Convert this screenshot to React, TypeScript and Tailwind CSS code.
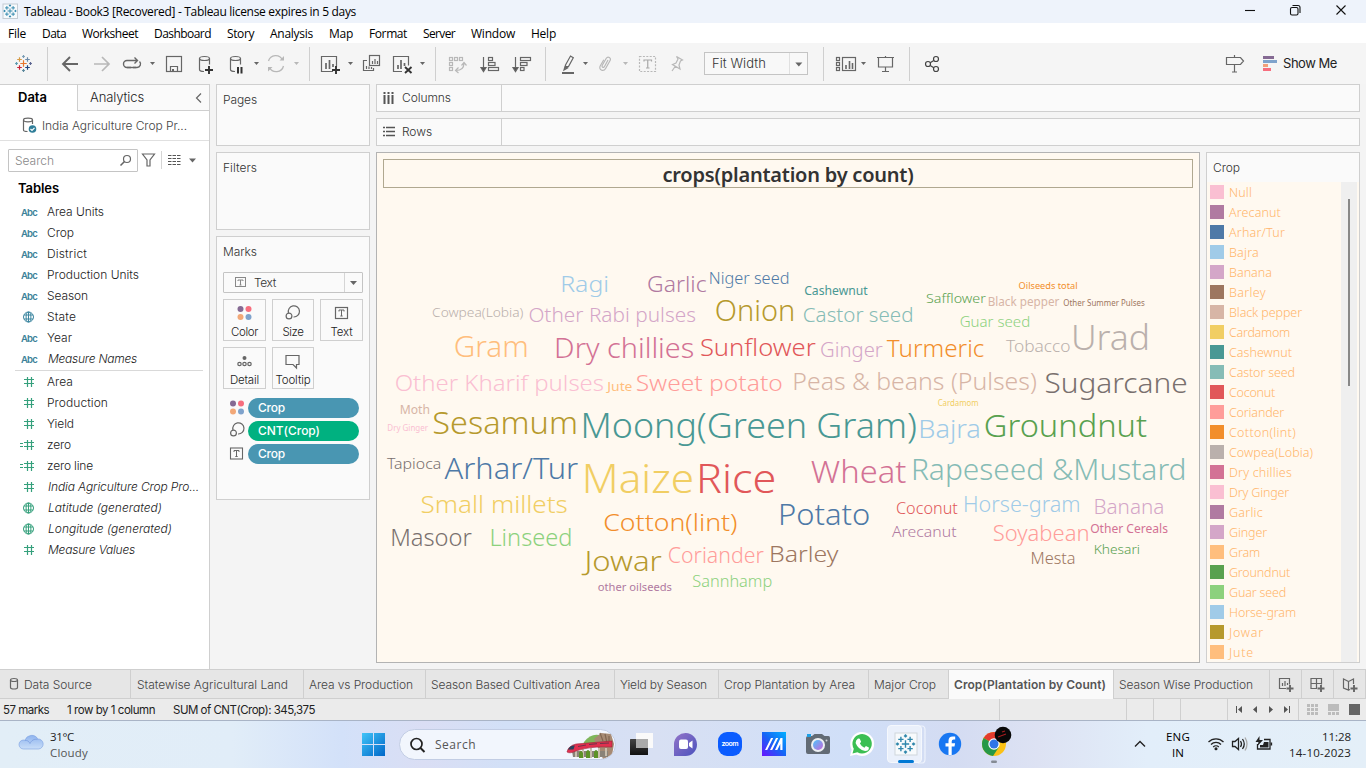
import { useLayoutEffect, useRef, useState } from "react";
import type { ReactNode } from "react";

/* One line of text whose tracking is set so that it fills a given width. */
function T({ w, className = "", children }: { w: number; className?: string; children: string }) {
  const ref = useRef<HTMLSpanElement>(null);
  const [ls, setLs] = useState(0);
  useLayoutEffect(() => {
    const el = ref.current;
    if (!el) return;
    const natural = el.getBoundingClientRect().width - ls * children.length;
    setLs((w - natural) / children.length);
  }, [w, children]);
  return (
    <span ref={ref} className={"inline-block shrink-0 whitespace-pre " + className} style={{ letterSpacing: ls }}>
      {children}
    </span>
  );
}

/* A drawing tile; its contents use window coordinates. */
function Tile({ x, y, w, h, children }: { x: number; y: number; w: number; h: number; children?: ReactNode }) {
  return (
    <svg className="block shrink-0" width={w} height={h} viewBox={`${x} ${y} ${w} ${h}`} fill="none" stroke="#666" strokeWidth={1.2}>
      {children}
    </svg>
  );
}

const Caret = ({ x, y = 63, c = "#666", s = 2.5 }: { x: number; y?: number; c?: string; s?: number }) => (
  <path d={`M${x - s} ${y - 1}h${2 * s}l${-s} ${s + 0.5}z`} fill={c} stroke="none" />
);

const Plus = ({ x, y, s = 4, c = "#333" }: { x: number; y: number; s?: number; c?: string }) => (
  <path d={`M${x - s} ${y}h${2 * s}M${x} ${y - s}v${2 * s}`} stroke={c} strokeWidth={1.9} />
);

function TableauMark({ x, y, k = 1, mono = false }: { x: number; y: number; k?: number; mono?: boolean }) {
  const marks: [number, number, number, string][] = [
    [0, 0, 3.2, "#e8762c"], [-4, -4, 2.3, "#d59a45"], [4, -4, 2.3, "#6c8ba9"], [-4, 4, 2.3, "#c72035"], [4, 4, 2.3, "#1f447e"],
    [0, -7, 1.4, "#7a9db5"], [0, 7, 1.4, "#59879b"], [-7, 0, 1.4, "#5b9aaf"], [7, 0, 1.4, "#5b6591"],
  ];
  return (
    <g transform={`translate(${x} ${y}) scale(${k})`} strokeWidth={1.2}>
      {marks.map(([a, b, s, c], i) => (
        <path key={i} d={`M${a - s} ${b}h${2 * s}M${a} ${b - s}v${2 * s}`} stroke={mono ? "#2e86ab" : c} />
      ))}
    </g>
  );
}

const Sep = ({ x, w = 1 }: { x: number; w?: number }) => (
  <Tile x={x} y={43} w={w} h={41}><path d={`M${x + 0.5} 47v34`} stroke="#cfcfcf" strokeWidth={1} /></Tile>
);

const MENU: [string, number, number][] = [
  ["File", 8, 18], ["Data", 42, 24], ["Worksheet", 82, 56], ["Dashboard", 154, 57], ["Story", 227, 27], ["Analysis", 270, 43],
  ["Map", 329, 24], ["Format", 369, 38], ["Server", 423, 32], ["Window", 471, 44], ["Help", 531, 25],
];

function TopBars() {
  return (
    <>
      <header className="flex h-[23px] items-center bg-[#eef3fb] text-[12px] text-black">
        <Tile x={0} y={0} w={24} h={23}>
          <rect x={3} y={4} width={14.5} height={14.5} fill="#f7fafc" stroke="#c4ccd4" strokeWidth={1} />
          <TableauMark x={10} y={11} k={0.78} mono />
        </Tile>
        <T w={332} className="pt-px">Tableau - Book3 [Recovered] - Tableau license expires in 5 days</T>
        <div className="ml-auto">
          <Tile x={1236} y={0} w={130} h={23}>
            <g stroke="#111" strokeWidth={1.1}>
              <path d="M1245 10.5h10" />
              <rect x={1290.5} y={7.5} width={7.5} height={7.5} rx={1.5} />
              <path d="M1292.5 5.5h5.5a2 2 0 0 1 2 2v5.5" />
              <path d="M1336.5 5.5l9 9m0-9l-9 9" />
            </g>
          </Tile>
        </div>
      </header>
      <nav className="flex h-5 items-center bg-white pl-2 text-[12px] leading-5 text-black">
        {MENU.map(([t, x, w], i) => (
          <div key={t} className="flex shrink-0 pt-px" style={{ width: (MENU[i + 1]?.[1] ?? x + w) - x }}><T w={w}>{t}</T></div>
        ))}
      </nav>
      <div className="flex h-[41px] items-center bg-[#f5f5f5]">
        <Tile x={0} y={43} w={47} h={41}><TableauMark x={23.5} y={63.5} /></Tile>
        <Sep x={47} w={13} />
        <Tile x={60} y={43} w={60} h={41}>
          <path d="M78 64H63m7-7l-7 7 7 7" strokeWidth={1.9} />
          <path d="M94 64h15m-7-7l7 7-7 7" strokeWidth={1.7} stroke="#b8b8b8" />
        </Tile>
        <Tile x={120} y={43} w={42} h={41}>
          <path d="M131 67.5h-4a3.5 3.5 0 0 1 0-7h10.500m-3-3l3 3-3 3M133 67.500h4a3.500 3.500 0 0 0 2.500-6" strokeWidth={1.4} />
          <path d="M127 67.500h9" strokeWidth={1.400} />
          <Caret x={152.500} />
        </Tile>
        <Tile x={162} y={43} w={28} h={41}>
          <rect x={166.500} y={56.500} width={15} height={15} />
          <path d="M170.500 71.500v-5h7v5" /><path d="M172 69h2v2h-2z" fill="#666" stroke="none" />
        </Tile>
        <Tile x={190} y={43} w={74} h={41}>
          {[0, 31].map((d) => (
            <g key={d} transform={`translate(${d} 0)`}>
              <ellipse cx={204.500} cy={58.500} rx={5} ry={2} /><path d="M199.500 58.500v11c0 1.200 1.800 2 4.500 2M209.500 58.500v6" />
            </g>
          ))}
          <Plus x={209} y={70} />
          <path d="M238 67v6.500m3.500-6.500v6.500" stroke="#333" strokeWidth={2} />
          <Caret x={256.500} />
        </Tile>
        <Tile x={264} y={43} w={45} h={41}>
          <g stroke="#b8b8b8" strokeWidth={1.300}>
            <path d="M268.500 61a7.500 7.500 0 0 1 14-1m1 6a7.500 7.500 0 0 1-14 1.500" />
            <path d="M279.500 60.500h4.500v-4.500zM272.500 67h-4.500v4.500z" fill="#b8b8b8" stroke="none" />
          </g>
          <Caret x={296.500} c="#b8b8b8" />
        </Tile>
        <Sep x={309} w={8} />
        <Tile x={317} y={43} w={42} h={41}>
          <path d="M333 71.500h-11.500v-15h15v10" />
          <path d="M326 63v6m3.500-9v9m3.500-5v3" strokeWidth={1.700} />
          <Plus x={336} y={70} />
          <Caret x={350.500} />
        </Tile>
        <Tile x={359} y={43} w={29} h={41}>
          <rect x={369.500} y={55.500} width={10} height={10} /><path d="M367 60.500h-3.500v10h10V68" />
          <path d="M372.500 61v3m2.500-5v5m2.500-3v3M366.500 66v3m2.500-2.500v2.500m2.500-2v2" />
        </Tile>
        <Tile x={388} y={43} w={47} h={41}>
          <path d="M402 71.500h-8.500v-15h15v9" /><path d="M398 65v4m3-9v9m3.500-6v3" strokeWidth={1.700} />
          <path d="M405 67l6.500 6m0-6l-6.500 6" stroke="#333" strokeWidth={1.900} />
          <Caret x={422.500} />
        </Tile>
        <Sep x={435} w={10} />
        <Tile x={445} y={43} w={28} h={41}>
          <g stroke="#b8b8b8">
            {[[449.500, 57.500], [454.500, 57.500], [459.500, 57.500], [449.500, 62.500], [449.500, 67.500]].map(([a, b]) => <rect key={`${a}${b}`} x={a} y={b} width={3} height={3} />)}
            <path d="M464 63c0 5-3 7.500-8 7.500m5.500-5l2.500-3 2.500 3M458.500 67.500l-3 3 3 2.500" />
          </g>
        </Tile>
        <Tile x={473} y={43} w={35} h={41}>
          <path d="M483.500 57v13" /><path d="M481 67.500h5l-2.500 4z" fill="#555" />
          <rect x={488.500} y={57.500} width={4} height={3} /><rect x={488.500} y={62.500} width={6.500} height={3} /><rect x={488.500} y={67.500} width={10} height={3} />
        </Tile>
        <Tile x={508} y={43} w={37} h={41}>
          <path d="M515.500 57v13" /><path d="M513 67.500h5l-2.500 4z" fill="#555" />
          <rect x={520.500} y={57.500} width={10} height={3} /><rect x={520.500} y={62.500} width={6.500} height={3} /><rect x={520.500} y={67.500} width={3.500} height={3} />
        </Tile>
        <Sep x={545} w={13} />
        <Tile x={558} y={43} w={36} h={41}>
          <path d="M565.500 65l5-9 2.800 1.800-4.800 8.700-2.800 1.500zM565 66.500l2.500 1.500-3.500 2zM568 66.500h-2.500" /><path d="M562 73h12" strokeWidth={2} />
          <Caret x={585.500} />
        </Tile>
        <Tile x={594} y={43} w={42} h={41}>
          <path d="M608 60l-3.500 6.500c-1 1.800-3.200.5-2.200-1.200l4-7c1.500-2.500 5.300-.5 3.800 2.200l-4.500 8c-2.200 3.800-7.500 1.200-5.300-2.700l3.500-6" stroke="#b8b8b8" />
          <Caret x={625.500} c="#b8b8b8" />
        </Tile>
        <Tile x={636} y={43} w={24} h={41}>
          <rect x={639.500} y={56.500} width={16} height={15} stroke="#b8b8b8" strokeDasharray="2 1.400" />
          <path d="M644 61.500v-1.500h7.500v1.500M647.750 60v8M646 68h3.500" stroke="#a8a8a8" />
        </Tile>
        <Tile x={660} y={43} w={44} h={41}>
          <path d="M676.500 56.500l6 3.500-2 1-1.500 4 1 4-7.500-4.500 3.500-1.500 2-4zM675.500 66l-3.500 5" stroke="#b8b8b8" />
        </Tile>
        <div className="flex h-[23px] w-[104px] items-center border border-[#c4c4c4] bg-[#f8f8f8] pl-[7px] font-[Inter] text-[13px] font-light text-[#333]">
          <T w={54}>Fit Width</T>
          <div className="ml-auto flex h-full border-l border-[#e0e0e0]"><Tile x={789} y={53} w={17} h={21}><Caret x={797.800} y={63.500} s={3.500} /></Tile></div>
        </div>
        <Tile x={808} y={43} w={62} h={41}>
          <path d="M823.500 47v34" stroke="#cfcfcf" strokeWidth={1} />
          {[57.500, 62.500, 67.500].map((b) => <rect key={b} x={836.500} y={b} width={3} height={3} />)}
          <rect x={842.500} y={57.500} width={13} height={13} /><path d="M846 65v4m3.500-8v8m3-6v6" strokeWidth={1.600} />
          <Caret x={863.500} />
        </Tile>
        <Tile x={870} y={43} w={39} h={41}>
          <path d="M877 57.500h17M878.500 57.500v9.500h14v-9.500M885.500 56v1.500M885.500 67v5M882 71.500h7" />
        </Tile>
        <Sep x={909} w={11} />
        <Tile x={920} y={43} w={22} h={41}>
          <g stroke="#444"><circle cx={928} cy={64} r={2.500} /><circle cx={936} cy={59} r={2.500} /><circle cx={936} cy={69} r={2.500} /><path d="M930.200 62.700l3.600-2.300m-3.600 5l3.600 2.300" /></g>
        </Tile>
        <div className="ml-auto flex items-center pr-[29px] font-[Inter] text-[13px] text-[#222]">
          <Tile x={1222} y={43} w={61} h={41}>
            <path d="M1226.500 57.500h14l3 3.500-3 3.500h-14zM1234.500 55v2.500m0 7v7.500m-2.500 0h5" />
            <g strokeWidth={3}><path d="M1263 57.500h11" stroke="#856a93" /><path d="M1263 61.500h14" stroke="#7fa3cc" /><path d="M1263 65.500h5" stroke="#f2a07a" /><path d="M1263 69.500h8" stroke="#f76e7e" /></g>
          </Tile>
          <T w={54}>Show Me</T>
        </div>
      </div>
    </>
  );
}

type Kind = "abc" | "geo" | "num" | "calc" | "geoNum";
const FIELDS: [string, Kind, number, boolean?][] = [
  ["Area Units", "abc", 57], ["Crop", "abc", 27], ["District", "abc", 40], ["Production Units", "abc", 92], ["Season", "abc", 41], ["State", "geo", 29], ["Year", "abc", 25], ["Measure Names", "abc", 90, true],
];
const MEASURES: [string, Kind, number, boolean?][] = [
  ["Area", "num", 26], ["Production", "num", 61], ["Yield", "num", 27], ["zero", "calc", 24], ["zero line", "calc", 46],
  ["India Agriculture Crop Pro...", "num", 152, true], ["Latitude (generated)", "geoNum", 115, true], ["Longitude (generated)", "geoNum", 125, true], ["Measure Values", "num", 88, true],
];

function FieldIcon({ kind }: { kind: Kind }) {
  if (kind === "abc") return <T w={16} className="font-[Inter] text-[9.500px] font-semibold text-[#3c8199]">Abc</T>;
  const c = kind === "geo" ? "#3c86a0" : "#35a07c";
  return (
    <svg className="-ml-0.5 block" width={18} height={14} fill="none" stroke={c} strokeWidth={1}>
      {kind === "geo" || kind === "geoNum" ? (
        <><circle cx={9.500} cy={7} r={5} /><ellipse cx={9.500} cy={7} rx={2.400} ry={5} /><path d="M5 5h9M5 9h9M9.500 2v10" /></>
      ) : (
        <path d="M8.500 2v10M12.500 2v10M5 4.500h10M5 8.500h10" strokeWidth={1.200} />
      )}
      {kind === "calc" && <path d="M1 5.500h3M1 8.500h3" />}
    </svg>
  );
}

const Row = ({ f: [name, kind, w, it] }: { f: [string, Kind, number, boolean?] }) => (
  <div className="flex h-[21px] items-center pl-[21px]">
    <div className="w-[26px] shrink-0 pt-px"><FieldIcon kind={kind} /></div>
    <T w={w} className={it ? "pl-px italic" : ""}>{name}</T>
  </div>
);

function DataPane() {
  return (
    <aside className="flex w-[210px] shrink-0 flex-col border-r border-[#cfcfcf] bg-white font-[Inter] text-[12px] font-light text-[#222]">
      <div className="flex h-[27px] shrink-0 border-t border-[#cfcfcf]">
        <div className="flex w-[77px] items-center pl-[18px] text-[13px] font-semibold text-black"><T w={29}>Data</T></div>
        <div className="flex flex-1 items-center border-b border-l border-[#cfcfcf] bg-[#fafafa] pl-3 text-[13px]">
          <T w={54}>Analytics</T>
          <div className="ml-auto"><Tile x={192} y={84} w={17} h={26}><path d="M201 92.500l-4.500 4.500 4.500 4.500" /></Tile></div>
        </div>
      </div>
      <div className="flex h-[30px] shrink-0 items-center border-b border-[#e0e0e0] text-[#444]">
        <Tile x={0} y={111} w={42} h={29}>
          <ellipse cx={28} cy={120} rx={4.500} ry={1.800} /><path d="M23.500 120v10c0 1 2 1.500 4 1.500M32.500 120v4" />
          <circle cx={32.500} cy={129} r={3.800} fill="#2f7e99" stroke="none" /><path d="M30.500 129l1.500 1.500 2.500-2.700" stroke="#fff" />
        </Tile>
        <T w={145}>India Agriculture Crop Pr...</T>
      </div>
      <div className="flex h-[37px] shrink-0 items-start pl-2 pt-2">
        <div className="flex h-[23px] w-[130px] items-center rounded-[1px] border border-[#c4c4c4] pl-1.5 text-[#888]">
          <T w={39}>Search</T>
          <div className="ml-auto pr-[3px]"><Tile x={116} y={150} w={18} h={21}><circle cx={127} cy={159} r={3.500} /><path d="M124.500 161.500l-4 4" strokeWidth={1.600} /></Tile></div>
        </div>
        <Tile x={138} y={149} w={71} h={23}>
          <path d="M142.500 154h12l-4.500 6v6h-3v-6z" /><path d="M161.500 151v18" stroke="#d5d5d5" strokeWidth={1} />
          {[155.500, 158.500, 161.500, 164.500].map((v) => <path key={v} d={`M168 ${v}h12.500`} strokeDasharray="3.500 1" stroke="#555" />)}
          <Caret x={192.500} y={159.500} s={3.500} />
        </Tile>
      </div>
      <div className="flex h-[21px] shrink-0 items-center pl-[18px] text-[13px] font-semibold text-black"><T w={41}>Tables</T></div>
      <div className="mt-0.5 pb-[1px]">{FIELDS.map((f) => <Row key={f[0]} f={f} />)}</div>
      <div className="ml-[15px] mr-[6px] border-t border-[#d9d9d9]" />
      <div>{MEASURES.map((f) => <Row key={f[0]} f={f} />)}</div>
    </aside>
  );
}

const ColorDots = ({ x, y }: { x: number; y: number }) => (
  <g stroke="none"><circle cx={x - 4} cy={y - 4} r={3} fill="#856a93" /><circle cx={x + 4} cy={y - 4} r={3} fill="#f76e7e" /><circle cx={x - 4} cy={y + 4} r={3} fill="#f2a878" /><circle cx={x + 4} cy={y + 4} r={3} fill="#7fa3cc" /></g>
);
const SizeIcon = ({ x, y }: { x: number; y: number }) => (
  <g strokeWidth={1.200}><path d={`M${x - 4} ${y + 1}a5.600 5.600 0 1 1 5 4`} /><circle cx={x - 3.500} cy={y + 4} r={2.900} /></g>
);
const TextIcon = ({ x, y }: { x: number; y: number }) => (
  <g><rect x={x - 6} y={y - 5.500} width={12} height={11} /><path d={`M${x - 2.500} ${y - 1.500}v-1.500h5v1.500M${x} ${y - 3}v6M${x - 1.200} ${y + 3}h2.400`} strokeWidth={1} /></g>
);

function MarkButton({ label, w, bw, children }: { label: string; w: number; bw: number; children: ReactNode }) {
  return (
    <div className="flex h-[42px] flex-col items-center border border-[#cfcfcf] text-[11.500px] text-[#222]" style={{ width: bw }}>
      <svg className="block" width={40} height={25} viewBox="-19.500 -11 40 25" fill="none" stroke="#666" strokeWidth={1.200}>{children}</svg>
      <T w={w} className="leading-[15px]">{label}</T>
    </div>
  );
}

function Pill({ label, w, green, children }: { label: string; w: number; green?: boolean; children: ReactNode }) {
  return (
    <div className="flex h-[23px] items-center">
      <svg className="block" width={24} height={23} viewBox="-11.500 -11.500 24 23" fill="none" stroke="#666" strokeWidth={1.100}>{children}</svg>
      <div className={(green ? "bg-[#00b180]" : "bg-[#4996b2]") + " flex h-5 w-[111px] items-center rounded-full pl-[10px] text-[12px] font-medium text-white"}><T w={w}>{label}</T></div>
    </div>
  );
}

function Shelves() {
  return (
    <section className="flex w-[154px] shrink-0 flex-col gap-1.5 font-[Inter] text-[12px] font-light text-[#333]">
      <div className="h-[62px] border border-[#cfcfcf] bg-[#fafafa] pl-1.5 pt-[6px] leading-[17px]"><T w={34}>Pages</T></div>
      <div className="h-[78px] border border-[#cfcfcf] bg-[#fafafa] pl-1.5 pt-[6px] leading-[17px]"><T w={34}>Filters</T></div>
      <div className="h-[264px] border border-[#cfcfcf] bg-[#fafafa] pl-1.5 pt-[6px] leading-[17px]">
        <T w={34}>Marks</T>
        <div className="mt-[12px] flex h-[21px] w-[140px] items-center rounded-[1px] border border-[#c4c4c4] pl-[11px]">
          <svg className="block" width={19} height={19} viewBox="-6 -9.500 19 19" fill="none" stroke="#888"><rect x={-5.500} y={-5} width={10} height={9} /><path d="M-3 -1.500v-1h5v1M-.5 -2.500v5M-1.500 2.500h2" strokeWidth={1} /></svg>
          <T w={22}>Text</T>
          <div className="ml-auto flex h-full border-l border-[#d5d5d5]"><Tile x={344} y={272} w={17} h={19}><Caret x={352.500} y={281} s={3.500} /></Tile></div>
        </div>
        <div className="mt-1.5 flex gap-1.5">
          <MarkButton label="Color" w={27} bw={43}><ColorDots x={0} y={2} /></MarkButton>
          <MarkButton label="Size" w={21} bw={42}><SizeIcon x={0} y={1} /></MarkButton>
          <MarkButton label="Text" w={22} bw={43}><TextIcon x={0} y={2} /></MarkButton>
        </div>
        <div className="mt-1.5 flex gap-1.5">
          <MarkButton label="Detail" w={29} bw={43}><circle cx={0} cy={-1} r={2} fill="#666" stroke="none" /><circle cx={-5} cy={5} r={1.700} /><circle cx={0} cy={5} r={1.700} /><circle cx={5} cy={5} r={1.700} /></MarkButton>
          <MarkButton label="Tooltip" w={35} bw={42}><path d="M-6.500 -3.500h13v9h-2.500v3.500l-3.500-3.500h-7z" /></MarkButton>
        </div>
        <div className="mt-[7px] pl-[1px]">
          <Pill label="Crop" w={27}><ColorDots x={1.500} y={0} /></Pill>
          <Pill label="CNT(Crop)" w={62} green><SizeIcon x={1.500} y={-1.500} /></Pill>
          <Pill label="Crop" w={27}><TextIcon x={1} y={0} /></Pill>
        </div>
      </div>
    </section>
  );
}

/* name, ink left, ink right, baseline, size, colour */
const WORDS: [string, number, number, number, number, string][] = [
  ["Ragi", 562, 607.700, 291, 22, "#a0cbe8"], ["Garlic", 648, 705.300, 291, 21.500, "#b07aa1"], ["Niger seed", 710, 788.500, 283, 16, "#4e79a7"],
  ["Cowpea(Lobia)", 432.700, 523, 317, 13, "#bab0ac"], ["Other Rabi pulses", 529.300, 694.700, 321, 20, "#d4a6c8"], ["Onion", 716, 793.500, 320, 28.500, "#b6992d"],
  ["Gram", 455, 527, 356, 28.500, "#ffbe7d"], ["Dry chillies", 556.300, 692.700, 357, 27, "#d37295"], ["Sunflower", 701, 815.700, 355, 24, "#e15759"],
  ["Other Kharif pulses", 395.700, 602.700, 390, 22.500, "#fabfd2"], ["Jute", 606.300, 632, 391, 12.500, "#ffbe7d"], ["Sweet potato", 636.700, 782, 390, 22.500, "#ff9d9a"],
  ["Moth", 400.700, 429.300, 414, 12, "#d7b5a6"], ["Dry Ginger", 388, 428, 431, 8.500, "#fabfd2"], ["Sesamum", 433.700, 576, 433, 31.500, "#b6992d"],
  ["Moong(Green Gram)", 583.300, 915.700, 437, 34.500, "#499894"], ["Cashewnut", 804.700, 867.300, 295, 12, "#499894"], ["Castor seed", 803.700, 912.300, 321, 20, "#86bcb6"],
  ["Safflower", 926.700, 985.700, 303, 13.500, "#59a14f"], ["Black pepper", 988.700, 1059.300, 306, 12.500, "#d7b5a6"], ["Oilseeds total", 1019, 1077, 289, 9.500, "#f28e2b"],
  ["Other Summer Pulses", 1063.700, 1144.300, 306, 8.500, "#9d7660"], ["Guar seed", 960.300, 1029.300, 326, 14.500, "#8cd17d"], ["Tobacco", 1006, 1070, 351, 17, "#bab0ac"],
  ["Urad", 1073.700, 1148, 349, 34.500, "#bab0ac"], ["Ginger", 821, 882.700, 356, 19.500, "#d4a6c8"], ["Turmeric", 887, 983, 356, 23, "#f28e2b"],
  ["Peas & beans (Pulses)", 794.300, 1036, 389, 24, "#d7b5a6"], ["Sugarcane", 1045.700, 1186.700, 392, 28, "#79706e"], ["Cardamom", 938, 978, 406, 8, "#f1ce63"],
  ["Bajra", 920.300, 980, 437, 25, "#a0cbe8"], ["Groundnut", 985.300, 1146, 436, 31.500, "#59a14f"], ["Tapioca", 387, 440.700, 468, 15, "#79706e"],
  ["Arhar/Tur", 444.700, 578, 478, 29.500, "#4e79a7"], ["Maize", 585, 692.700, 492, 40, "#f1ce63"], ["Rice", 699.300, 775, 492, 40, "#e15759"],
  ["Small millets", 421.700, 566.300, 512, 24, "#f1ce63"], ["Masoor", 392, 471.700, 545, 23, "#79706e"], ["Linseed", 491.300, 571, 545, 23, "#8cd17d"],
  ["Cotton(lint)", 604.300, 736.700, 530, 24, "#f28e2b"], ["Jowar", 582.300, 661.700, 570, 27, "#b6992d"], ["Coriander", 668.700, 763.700, 562, 21.500, "#ff9d9a"],
  ["other oilseeds", 598.300, 671.300, 591, 11, "#b07aa1"], ["Sannhamp", 693, 771.300, 586, 16, "#8cd17d"], ["Wheat", 811, 905.300, 482, 30.500, "#d37295"],
  ["Rapeseed &Mustard", 913.300, 1184.700, 479, 29.500, "#86bcb6"], ["Potato", 780.300, 869.300, 524, 29.500, "#4e79a7"], ["Coconut", 896.700, 957.300, 513, 16, "#e15759"],
  ["Horse-gram", 964.700, 1079.300, 511, 21, "#a0cbe8"], ["Banana", 1095, 1163.700, 513, 19.500, "#d4a6c8"], ["Arecanut", 892, 956, 536, 15, "#b07aa1"],
  ["Soyabean", 993.700, 1088.300, 540, 21, "#ff9d9a"], ["Other Cereals", 1090.700, 1167.300, 533, 12.500, "#d37295"], ["Khesari", 1094.700, 1139.300, 554, 13, "#59a14f"],
  ["Mesta", 1031.700, 1075, 563, 15.500, "#9d7660"], ["Barley", 770.700, 838.300, 561, 22, "#9d7660"],
];

function bearing(name: string, size: number) {
  const first = name[0] === "J" ? -0.08 : /^[TWAY]/.test(name) ? 0.005 : /^[OCGSo]/.test(name) ? 0.045 : 0.08;
  const last = /[ry/]$/.test(name) ? 0.005 : /[ao)et]$/.test(name) ? 0.035 : 0.06;
  return [first * size, last * size];
}

function WordCloud() {
  return (
    <main className="flex w-[824px] shrink-0 flex-col border border-[#b3b3b3] bg-[#fff9f0] p-1.5">
      <h1 className="flex h-[29px] shrink-0 items-center justify-center border border-[#b0a890] pt-0.5 text-[20px] font-semibold leading-none text-[#333] [font-family:'Noto_Sans']">
        <T w={251}>crops(plantation by count)</T>
      </h1>
      <svg className="block" width={810} height={468} viewBox="383 188 810 468">
        {WORDS.map(([name, l, r, y, size, color]) => {
          const [a, b] = bearing(name, size);
          return (
            <text key={name} x={l - a} y={y + (size > 14 ? 0.5 : 0)} fontSize={size} fill={color} textLength={r - l + a + b} lengthAdjust="spacingAndGlyphs" className={(size <= 12.5 ? "font-normal" : "font-light") + " [font-family:'Noto_Sans']"}>{name}</text>
          );
        })}
      </svg>
    </main>
  );
}

const LEGEND: [string, number, string][] = [
  ["Null", 23, "#fabfd2"], ["Arecanut", 52, "#b07aa1"], ["Arhar/Tur", 56, "#4e79a7"], ["Bajra", 30, "#a0cbe8"], ["Banana", 43, "#d4a6c8"], ["Barley", 37, "#9d7660"],
  ["Black pepper", 73, "#d7b5a6"], ["Cardamom", 61, "#f1ce63"], ["Cashewnut", 63, "#499894"], ["Castor seed", 66, "#86bcb6"], ["Coconut", 46, "#e15759"], ["Coriander", 55, "#ff9d9a"],
  ["Cotton(lint)", 67, "#f28e2b"], ["Cowpea(Lobia)", 84, "#bab0ac"], ["Dry chillies", 63, "#d37295"], ["Dry Ginger", 60, "#fabfd2"], ["Garlic", 34, "#b07aa1"], ["Ginger", 38, "#d4a6c8"],
  ["Gram", 31, "#ffbe7d"], ["Groundnut", 61, "#59a14f"], ["Guar seed", 57, "#8cd17d"], ["Horse-gram", 67, "#a0cbe8"], ["Jowar", 35, "#b6992d"], ["Jute", 25, "#ffbe7d"],
];

function Legend() {
  return (
    <section className="flex w-[154px] shrink-0 flex-col overflow-hidden border border-[#cfcfcf] bg-[#fafafa]">
      <div className="flex h-[29px] shrink-0 items-center pl-1.5 font-[Inter] text-[12px] font-light text-[#333]"><T w={27}>Crop</T></div>
      <div className="flex min-h-0 flex-1 overflow-hidden bg-[#fff9f0] pr-0.5">
        <div className="flex-1 pl-[3px]">
          {LEGEND.map(([name, w, color]) => (
            <div key={name} className="flex h-5 items-center gap-[5px] text-[12.500px] font-light text-[#ffb56a] [font-family:'Noto_Sans']">
              <span className="h-3.5 w-3.5 shrink-0" style={{ backgroundColor: color }} /><T w={w} className="pt-0.5 leading-[18px]">{name}</T>
            </div>
          ))}
        </div>
        <div className="w-4 bg-[#efefef] pl-[7px] pt-[17px]"><div className="h-[187px] w-0.5 bg-[#888]" /></div>
      </div>
    </section>
  );
}

const TABS: [string, number, number, number][] = [
  ["Statewise Agricultural Land", 173, 6, 151], ["Area vs Production", 122, 5, 104], ["Season Based Cultivation Area", 189, 5, 169], ["Yield by Season", 104, 5, 87],
  ["Crop Plantation by Area", 150, 5, 131], ["Major Crop", 80, 5, 62], ["Crop(Plantation by Count)", 165, 5, 152], ["Season Wise Production", 156, 5, 134],
];

function SheetTabs() {
  return (
    <div className="flex h-[30px] shrink-0 border-t border-[#cfcfcf] bg-[#e6e6e6] font-[Inter] text-[12px] font-light text-[#444]">
      <div className="flex w-[131px] shrink-0 items-center border-b border-r border-[#cfcfcf]">
        <Tile x={0} y={670} w={24} h={29}><ellipse cx={14} cy={680} rx={3.500} ry={1.500} /><path d="M10.500 680v7.500c0 2 7 2 7 0V680" /></Tile>
        <T w={68} className="pt-0.5">Data Source</T>
      </div>
      {TABS.map(([t, bw, pl, w], i) => (
        <div key={t} className={i === 6 ? "flex shrink-0 items-center border-r border-[#cfcfcf] bg-[#fafafa] font-semibold text-[#555]" : "flex shrink-0 items-center border-b border-r border-[#cfcfcf] pt-0.5"} style={{ width: bw, paddingLeft: pl }}>
          <T w={w}>{t}</T>
        </div>
      ))}
      <div className="flex flex-1 border-b border-[#cfcfcf]">
        <Tile x={1270} y={670} w={96} h={29}>
          <path d="M1301.500 670v29M1333.500 670v29M1365.500 670v29" stroke="#cfcfcf" strokeWidth={1} />
          <path d="M1286 688.500h-6.500v-10h10v6" /><path d="M1282.500 683v3m2.500-5v5m2.500-3v2" />
          <path d="M1317 688.500h-6v-10h10.500v6M1311 683.500h10.500M1316.500 678.500v10" />
          <path d="M1348.500 681.500l-5-2.500v9l5 2v-8.500l5-2.500v5M1348.500 690l1.500-.5" />
          <Plus x={1290} y={688.500} s={3.500} c="#666" /><Plus x={1321} y={688.500} s={3.500} c="#666" /><Plus x={1354} y={688.500} s={3.500} c="#666" />
        </Tile>
      </div>
    </div>
  );
}

function StatusBar() {
  return (
    <div className="flex h-[22px] shrink-0 items-center border-b border-[#a9b4c6] bg-[#ebebeb] pl-[3px] font-[Inter] text-[11.500px] text-[#222]">
      <T w={46} className="pt-0.5">57 marks</T><div className="w-[18px]" /><T w={88} className="pt-0.5">1 row by 1 column</T><div className="w-[18px]" /><T w={142} className="pt-0.5">SUM of CNT(Crop): 345,375</T>
      <div className="ml-auto">
        <Tile x={996} y={699} w={370} h={21}>
          <path d="M999.500 699v21M1126.500 699v21M1153.500 699v21M1180.500 699v21M1227.500 699v21M1298.500 699v21" stroke="#cfcfcf" strokeWidth={1} />
          <g fill="#555" stroke="none">
            <path d="M1236 706h1v7h-1zM1242 706v7l-4-3.500zM1257 706v7l-4-3.500zM1269 706v7l4-3.500zM1284 706v7l4-3.500zM1289 706h1v7h-1z" />
            <rect x={1349} y={704} width={11} height={11} fill="#666" />
            <g fill="#bcbcbc">
              {[0, 4, 8].map((a) => [0, 4, 8].map((b) => <rect key={`${a}-${b}`} x={1307 + a} y={704 + b} width={3} height={3} />))}
              <rect x={1328} y={704} width={11} height={7} /><rect x={1328} y={712} width={3} height={3} /><rect x={1332} y={712} width={3} height={3} /><rect x={1336} y={712} width={3} height={3} />
            </g>
          </g>
        </Tile>
      </div>
    </div>
  );
}

function Taskbar() {
  return (
    <footer className="flex h-[47px] shrink-0 items-center bg-[linear-gradient(90deg,#e2eef7_0%,#e1edf8_17%,#d3e1f9_25%,#dadef4_31%,#d2e0f7_37%,#d8e0f3_48%,#d0dff8_62%,#d4dcf2_70%,#dde2f3_76%,#e2eefa_84%,#e4eff8_100%)] text-[11.500px] text-[#222]">
      <Tile x={0} y={721} w={50} h={47}>
        <defs><linearGradient id="cloud" x1="0" y1="0" x2="0" y2="1"><stop stopColor="#8fb4ef" /><stop offset="1" stopColor="#c9def8" /></linearGradient></defs>
        <path d="M23.500 749a4.500 4.500 0 0 1 0-9c.5 0 1 .1 1.500.2a7 7 0 0 1 12.800-1.200A5 5 0 0 1 38.500 749z" fill="url(#cloud)" stroke="#7b9fe0" strokeWidth={0.600} />
        <path d="M25 740.500c2.500-.5 4 1 5 3 1.500-3 4-5 7.500-4" stroke="#6f94da" strokeWidth={0.600} />
      </Tile>
      <div className="flex w-[309px] shrink-0 flex-col items-start leading-4"><T w={24}>31°C</T><T w={38} className="text-[#555]">Cloudy</T></div>
      <Tile x={359} y={721} w={40} h={47}>
        <defs><linearGradient id="win" x1="362" y1="733" x2="385" y2="756" gradientUnits="userSpaceOnUse"><stop stopColor="#40c4f8" /><stop offset="1" stopColor="#0067c8" /></linearGradient></defs>
        <path d="M362 733h11v11h-11zM374 733h11v11h-11zM362 745h11v11h-11zM374 745h11v11h-11z" fill="url(#win)" stroke="none" />
      </Tile>
      <div className="flex h-[31px] w-[217px] shrink-0 items-center overflow-hidden rounded-full border border-[#c2cde4] bg-[#f2f6fd] text-[12px] text-[#555]">
        <Tile x={400} y={729} w={35} h={29}><circle cx={416.500} cy={743} r={5.500} stroke="#222" strokeWidth={1.700} /><path d="M420.500 747l4 4" stroke="#222" strokeWidth={1.900} /></Tile>
        <T w={41}>Search</T>
        <div className="ml-auto pr-px">
          <Tile x={565} y={729} w={50} h={29}>
            <path d="M585 741q8-10 18-6l5 8-25 4z" fill="#7fb65b" stroke="none" />
            <path d="M595 738l7-6 10 1 3 10-2 11-9 4z" fill="#a68a73" stroke="none" /><path d="M601 732l3 8M606 733l2 9M610 735v8" stroke="#806650" />
            <path d="M573 750h36v6h-35z" fill="#8a8378" stroke="none" />
            <path d="M577 749v7M584 748v9M592 747v10M600 747v10M607 747v8" stroke="#c9bfae" strokeWidth={2} />
            <path d="M580 752q2-4 4 0v5h-4zM587 751q2-4 4 0v6h-4zM595 751q2-4 4 0v6h-4z" fill="#5d9228" stroke="none" />
            <path d="M568 751q1-6 9-8l36-3v6q-22-1-36 4-6 3-9 1z" fill="#e0304f" stroke="#a02238" strokeWidth={0.600} />
            <path d="M570 748q2-3 5-3l-1 3z" stroke="#28445d" strokeWidth={1.200} fill="#28445d" /><path d="M579 745.500l8-1.500M590 743.500l8-.800M601 742.500l9-.500" stroke="#70334a" strokeWidth={1} />
          </Tile>
        </div>
      </div>
      <Tile x={616} y={721} w={269} h={47}>
        <defs>
          <linearGradient id="black" x1="0" y1="0" x2="0" y2="1"><stop stopColor="#444" /><stop offset="1" stopColor="#111" /></linearGradient>
          <linearGradient id="chat" x1="0" y1="0" x2="1" y2="1"><stop stopColor="#9374c8" /><stop offset="1" stopColor="#4b52bd" /></linearGradient>
          <linearGradient id="asus" x1="0" y1="1" x2="1" y2="0"><stop stopColor="#6a13ff" /><stop offset=".5" stopColor="#1565f5" /><stop offset="1" stopColor="#00b0ff" /></linearGradient>
          <linearGradient id="lens" x1="0" y1="0" x2="1" y2="1"><stop stopColor="#4cc4fa" /><stop offset="1" stopColor="#c766dc" /></linearGradient>
        </defs>
        <g stroke="none">
          <rect x={636} y={733} width={17} height={15} fill="#fafafa" /><rect x={630} y={739} width={18} height={16} rx={0.500} fill="url(#black)" /><rect x={636} y={739} width={12} height={9} fill="#aaa" />
          <path d="M674 756v-12a11.500 11.500 0 1 1 11.500 12z" fill="url(#chat)" /><rect x={679} y={739.500} width={9} height={9.500} rx={2} fill="#fff" /><path d="M689 743l3.500-2.500v8L689 746z" fill="#fff" />
          <rect x={718} y={732} width={24} height={24} rx={9} fill="#0b5cff" />
          <text x={721.500} y={746} fontSize={7} fontWeight={600} textLength={17} fill="#fff" className="[font-family:Inter]">zoom</text>
          <rect x={762} y={732} width={24} height={24} fill="url(#asus)" /><path d="M765 750l6-12h2.200l-6 12zM770 750l6-12h2.200l-6 12zM775 750l5.500-12h2v12h-2.200v-6l-3 6z" fill="#fff" />
          <path d="M806 738q0-2 2-2h4l2.500-2h7.500l2.500 2h4q1.500 0 1.500 2v14q0 2-2 2h-20q-2 0-2-2z" fill="#626b75" /><rect x={807} y={734} width={4} height={3} fill="#1ea0e6" />
          <circle cx={818} cy={745} r={7} fill="#eceff2" /><circle cx={818} cy={745} r={5} fill="url(#lens)" /><circle cx={826.500} cy={740.500} r={1} fill="#cdd3d8" />
          <path d="M850 756l1.700-6.200a12 12 0 1 1 4.600 4.600z" fill="#fff" /><path d="M852.500 753.500l1.300-4.800a9.700 9.700 0 1 1 3.600 3.500z" fill="#3bbf53" />
          <path d="M858 738.500l1.800.2 1.300 3-1.200 1.700q1.500 3 4.500 4.300l1.500-1.700 3 1.500q.2 3.500-3.800 3.500-7-1.500-9.500-8 0-3 2.400-4.500z" fill="#fff" />
        </g>
      </Tile>
      <Tile x={885} y={721} w={41} h={47}>
        <path d="M918 726h4q3 0 3 4v29q0 4-3 4h-4" stroke="#eef3fc" />
        <rect x={887.500} y={725.500} width={34} height={37} rx={3.500} fill="#eaf0fb" stroke="#f5f8fd" strokeWidth={1} />
        <rect x={895} y={733} width={22} height={22} fill="#f7fafc" stroke="#cfd6dc" strokeWidth={1} /><TableauMark x={905.500} y={744} k={1.150} mono />
        <rect x={898} y={760} width={16} height={3} rx={1.500} fill="#0078d4" stroke="none" />
      </Tile>
      <Tile x={926} y={721} w={90} h={47}>
        <g stroke="none">
          <circle cx={950} cy={744} r={11.200} fill="#1877f2" />
          <path d="M948.500 755v-8.500h-3v-3.300h3v-2.500q0-4.300 4.200-4.300l2.500.2v2.900h-1.500q-2 0-2 1.900v1.800h3.400l-.6 3.300h-2.800V755z" fill="#fff" />
          <circle cx={994} cy={744} r={12} fill="#fbc116" />
          <path d="M994 744L983.600 738a12 12 0 0 1 20.800 0z" fill="#e33b2e" /><path d="M983.600 738a12 12 0 0 0 9.400 18l6-9-5-3z" fill="#279847" />
          <circle cx={994} cy={744} r={5.700} fill="#fff" /><circle cx={994} cy={744} r={4.500} fill="#2f75e8" />
          <circle cx={1003} cy={735} r={8.300} fill="#080808" />
          <rect x={991} y={760.500} width={6} height={2.500} rx={1.200} fill="#858b94" />
        </g>
        <path d="M998 737l8-3m-4-2l3-1" stroke="#a51d20" />
      </Tile>
      <div className="ml-auto flex items-center pr-[15px]">
        <Tile x={1130} y={721} w={32} h={47}><path d="M1135 746.500l5-5 5 5" stroke="#222" strokeWidth={1.400} /></Tile>
        <div className="flex w-8 flex-col items-center leading-4 text-black"><T w={24}>ENG</T><T w={12}>IN</T></div>
        <Tile x={1194} y={721} w={90} h={47}>
          <g stroke="#222" strokeWidth={1.300}>
            <path d="M1208.500 742a10.500 10.500 0 0 1 15 0M1211 744.500a7 7 0 0 1 10 0M1213.200 747a4 4 0 0 1 5.600 0" /><circle cx={1216} cy={748.800} r={0.900} fill="#222" />
            <path d="M1232.500 741.500h2.500l3.500-3v11l-3.500-3h-2.500zM1240.500 741q2 3 0 6M1242.500 739q3.500 5 0 10" /><path d="M1245 737.500q4 6.500 0 13" stroke="#aaa" />
            <path d="M1264 739.500h6v9.500h-12.500v-5M1271.500 742.500v3" /><path d="M1260 747v-2h3l1-3h4.500v5.500h-8.500z" fill="#222" stroke="none" /><path d="M1259.500 736l-4 6h3l-1 4 5.500-6h-3.500z" fill="#222" stroke="none" />
          </g>
        </Tile>
        <div className="flex w-[67px] flex-col items-end leading-4"><T w={29}>11:28</T><T w={62}>14-10-2023</T></div>
      </div>
    </footer>
  );
}

const ShelfRow = ({ label, w, children }: { label: string; w: number; children: ReactNode }) => (
  <div className="flex h-7 items-center border border-[#cfcfcf] bg-[#fafafa]">
    <div className="flex h-full w-[125px] items-center border-r border-[#cfcfcf]">
      <svg className="block" width={25} height={26} stroke="#555" fill="none">{children}</svg>
      <T w={w}>{label}</T>
    </div>
  </div>
);

export default function App() {
  return (
    <div className="flex h-[768px] w-[1366px] flex-col overflow-hidden bg-[#f4f4f4] antialiased [font-family:'Open_Sans',sans-serif]">
      <TopBars />
      <div className="flex min-h-0 flex-1 gap-1.5">
        <DataPane />
        <Shelves />
        <div className="flex flex-col gap-1.5 pb-1.5">
          <div className="flex w-[984px] flex-col gap-1.5 font-[Inter] text-[12px] font-light text-[#333]">
            <ShelfRow label="Columns" w={49}><path d="M7.500 7v2M7.500 10v9M11.500 7v2M11.500 10v9M15.500 7v2M15.500 10v9" strokeWidth={2} /></ShelfRow>
            <ShelfRow label="Rows" w={30}><path d="M6 8.500h2M9 8.500h9M6 12.500h2M9 12.500h9M6 16.500h2M9 16.500h9" strokeWidth={1.600} /></ShelfRow>
          </div>
          <div className="flex min-h-0 flex-1 gap-1.5"><WordCloud /><Legend /></div>
        </div>
      </div>
      <SheetTabs />
      <StatusBar />
      <Taskbar />
    </div>
  );
}
